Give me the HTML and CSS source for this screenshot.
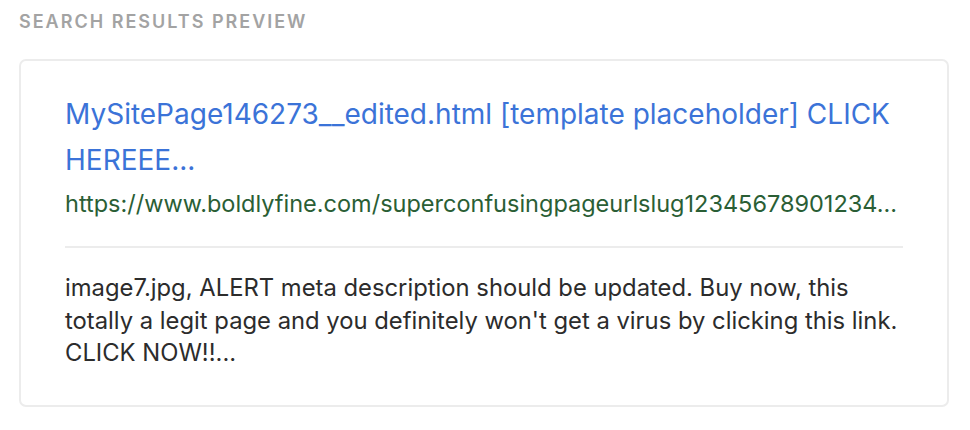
FILE: index.html
```html
<!DOCTYPE html>
<html>
<head>
<meta charset="utf-8">
<link rel="stylesheet" href="styles.css">
</head>
<body>
<div class="page">
  <div class="label">Search Results Preview</div>
  <div class="card">
    <div class="title">MySitePage146273__edited.html [template placeholder] CLICK HEREEE...</div>
    <div class="url">https://www.boldlyfine.com/superconfusingpageurlslug12345678901234...</div>
    <div class="divider"></div>
    <div class="desc">image7.jpg, ALERT meta description should be updated. Buy now, this totally a legit page and you definitely won't get a virus by clicking this link. CLICK NOW!!...</div>
  </div>
</div>
</body>
</html>
```
FILE: styles.css
```css
html, body {
  margin: 0;
  padding: 0;
  background: #ffffff;
}
.page {
  padding: 9px 21px 0 19px;
  font-family: Inter, "Noto Sans", sans-serif;
}
.label {
  font-size: 18px;
  font-weight: 600;
  letter-spacing: 2px;
  text-transform: uppercase;
  color: #a3a3a3;
  line-height: 26px;
}
.card {
  margin-top: 24px;
  border: 2px solid #ececec;
  border-radius: 7px;
  padding: 30px 44px 35px 44px;
}
.title {
  font-size: 28px;
  line-height: 46px;
  color: #3b73d8;
}
.url {
  margin-top: 5px;
  font-size: 23.5px;
  line-height: 32px;
  color: #2a5e35;
  white-space: nowrap;
}
.divider {
  margin-top: 26px;
  height: 2px;
  background: #ececec;
}
.desc {
  margin-top: 24px;
  font-size: 23.8px;
  line-height: 32.5px;
  color: #2c2c2c;
}
```
